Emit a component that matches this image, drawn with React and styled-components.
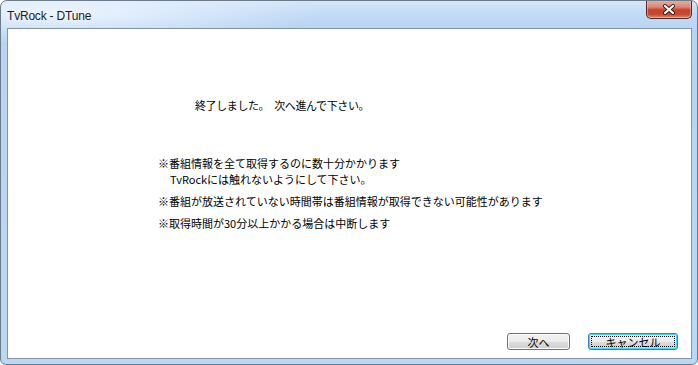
import React from 'react';
import styled, { createGlobalStyle } from 'styled-components';

const GlobalStyle = createGlobalStyle`
  html, body {
    margin: 0;
    padding: 0;
    background: #ffffff;
  }
  body {
    font-family: "Noto Sans CJK JP", "Liberation Sans", sans-serif;
  }
`;

const Window = styled.div`
  box-sizing: border-box;
  width: 698px;
  height: 365px;
  display: flex;
  flex-direction: column;
  border: 1px solid #6c7b8b;
  border-radius: 7px 7px 6px 6px;
  background:
    radial-gradient(ellipse 260px 30px at 60px 12px, rgba(240, 247, 255, 0.9), rgba(240, 247, 255, 0) 100%),
    linear-gradient(180deg, #d6e6f8 0px, #c1daf5 14px, #b9d4f2 28px, #bcd7f4 100%);
  padding: 0 5px 5px 6px;
  overflow: hidden;
`;

const TitleBar = styled.div`
  height: 27px;
  display: flex;
  align-items: flex-start;
  justify-content: space-between;
`;

const Title = styled.div`
  font-family: "Liberation Sans", "Noto Sans", sans-serif;
  font-size: 12px;
  line-height: 14px;
  color: #1b1b1b;
  padding-top: 8px;
  letter-spacing: -0.2px;
  text-shadow: 0 0 6px rgba(255, 255, 255, 0.9);
`;

const CloseButton = styled.div`
  box-sizing: border-box;
  width: 46px;
  height: 19px;
  margin-top: -1px;
  display: flex;
  align-items: center;
  justify-content: center;
  border: 1px solid #4e2a24;
  border-top: none;
  border-radius: 0 0 5px 5px;
  background: linear-gradient(180deg, #e8b3a6 0%, #d98572 40%, #c2432e 55%, #c44a33 80%, #dd8c70 100%);
  box-shadow: inset 0 0 0 1px rgba(255, 210, 200, 0.45);
`;

const Client = styled.div`
  flex: 1;
  display: flex;
  flex-direction: column;
  background: #ffffff;
  border: 1px solid #8294a8;
`;

const Message = styled.div`
  font-size: 11px;
  line-height: 16px;
  color: #000000;
  margin: 68px 0 0 187px;
  letter-spacing: -0.4px;
  word-spacing: 3px;
`;

const Notes = styled.div`
  margin: 42px 0 0 150px;
  display: flex;
  flex-direction: column;
  gap: 6px;
`;

const Note = styled.div`
  font-size: 11px;
  line-height: 16px;
  color: #000000;
  white-space: nowrap;
`;

const Indent = styled.div`
  padding-left: 12px;
`;

const ButtonRow = styled.div`
  margin-top: auto;
  display: flex;
  justify-content: flex-end;
  gap: 18px;
  padding: 0 13px 8px 0;
`;

const Button = styled.div`
  box-sizing: border-box;
  width: ${(p) => p.$width}px;
  height: 17px;
  display: flex;
  align-items: center;
  justify-content: center;
  font-size: 11px;
  color: #000000;
  border: 1px solid ${(p) => (p.$default ? '#3c7fb1' : '#707070')};
  border-radius: 3px;
  background: linear-gradient(180deg, #f2f2f2 0%, #ebebeb 50%, #dddddd 51%, #cfcfcf 100%);
  box-shadow: ${(p) => (p.$default ? 'inset 0 0 0 1px #48d5fc' : 'inset 0 0 0 1px #fcfcfc')};
  position: relative;
`;

const FocusRect = styled.span`
  position: absolute;
  inset: 2px;
  border: 1px dotted #000000;
  pointer-events: none;
`;

const CloseGlyph = () => (
  <svg width="14" height="11" viewBox="0 0 14 11">
    <path d="M3 2 L11 9 M11 2 L3 9" stroke="#3b1c17" strokeWidth="4" strokeLinecap="round" />
    <path d="M3 2 L11 9 M11 2 L3 9" stroke="#ffffff" strokeWidth="2.2" strokeLinecap="round" />
  </svg>
);

export default function App() {
  return (
    <>
      <GlobalStyle />
      <Window>
        <TitleBar>
          <Title>TvRock - DTune</Title>
          <CloseButton>
            <CloseGlyph />
          </CloseButton>
        </TitleBar>
        <Client>
          <Message>終了しました。 次へ進んで下さい。</Message>
          <Notes>
            <Note>
              ※番組情報を全て取得するのに数十分かかります
              <Indent>TvRockには触れないようにして下さい。</Indent>
            </Note>
            <Note>※番組が放送されていない時間帯は番組情報が取得できない可能性があります</Note>
            <Note>※取得時間が30分以上かかる場合は中断します</Note>
          </Notes>
          <ButtonRow>
            <Button $width={63}>次へ</Button>
            <Button $width={90} $default>
              キャンセル
              <FocusRect />
            </Button>
          </ButtonRow>
        </Client>
      </Window>
    </>
  );
}
